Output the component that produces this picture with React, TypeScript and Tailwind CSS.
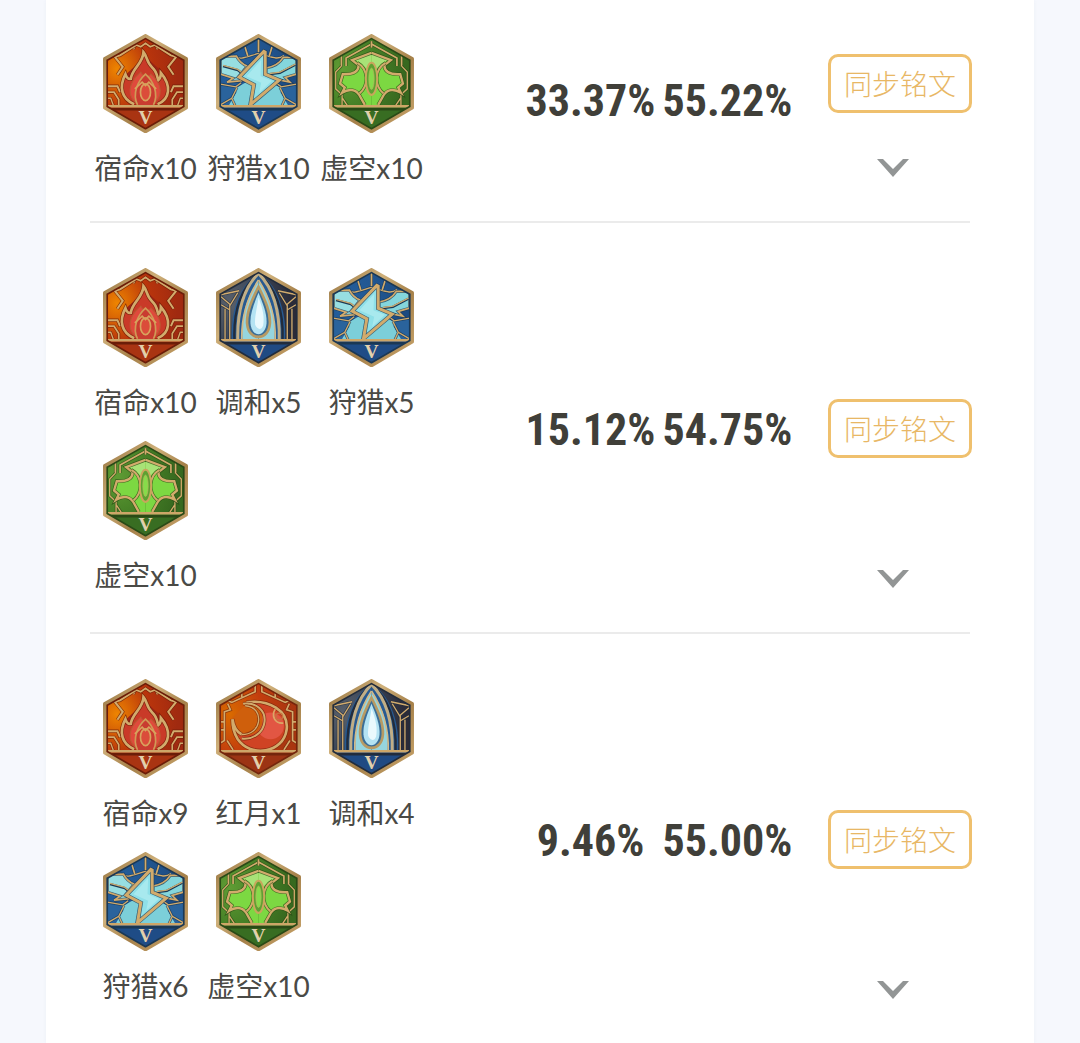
import { useId } from 'react';
import type { ReactNode } from 'react';

type RuneKind = 'fate' | 'hunt' | 'void' | 'harmony' | 'moon';

const runeNames: Record<RuneKind, string> = {
  fate: '宿命',
  hunt: '狩猎',
  void: '虚空',
  harmony: '调和',
  moon: '红月',
};

const palettes: Record<RuneKind, { from: string; mid: string; to: string; base: string; dark: string }> = {
  fate: { from: '#ee8500', mid: '#b8340c', to: '#a02a10', base: '#a93412', dark: '#6b1d08' },
  hunt: { from: '#245f9c', mid: '#225792', to: '#1d4a80', base: '#1f4c86', dark: '#1b3854' },
  void: { from: '#5f9c34', mid: '#457f26', to: '#37691f', base: '#386d22', dark: '#2a4a16' },
  harmony: { from: '#59606b', mid: '#3a4557', to: '#2b2b38', base: '#204a83', dark: '#222c3c' },
  moon: { from: '#d96a00', mid: '#c23d0e', to: '#a93610', base: '#9c3414', dark: '#74260c' },
};

const builds: { runes: [RuneKind, number][]; pick: string; win: string }[] = [
  { runes: [['fate', 10], ['hunt', 10], ['void', 10]], pick: '33.37%', win: '55.22%' },
  { runes: [['fate', 10], ['harmony', 5], ['hunt', 5], ['void', 10]], pick: '15.12%', win: '54.75%' },
  { runes: [['fate', 9], ['moon', 1], ['harmony', 4], ['hunt', 6], ['void', 10]], pick: '9.46%', win: '55.00%' },
];

const HEX = 'M0 7 L122 76 V223 L0 294 L-122 223 V76 Z';

function Both({ children }: { children: ReactNode }) {
  return (
    <>
      {children}
      <g transform="scale(-1 1)">{children}</g>
    </>
  );
}

// gold inlay with a dark edge under it
function Inlay({ d, dark, width = 6, fill = 'none' }: { d: string; dark: string; width?: number; fill?: string }) {
  return (
    <>
      <path d={d} fill={fill} stroke={dark} strokeWidth={width + 4} strokeOpacity="0.75" />
      <path d={d} fill="none" stroke="#d2ab6c" strokeWidth={width} />
    </>
  );
}

function FateArt({ dark }: { dark: string }) {
  return (
    <>
      <Inlay dark={dark} d="M-36 48 L-30 34 L-14 40 L0 30 L14 40 L30 34 L36 48" width={5} />
      <Both>
        <Inlay dark={dark} d="M-30 36 L-76 66 L-92 70 L-68 100 L-84 124 M-118 158 H-84 L-76 176" />
        <Inlay dark={dark} d="M-118 176 H-94 L-80 198 V216" width={5} />
        <Inlay dark={dark} d="M-118 194 H-104 L-96 216" width={4} />
      </Both>
      <path d="M-42 216 C-74 196 -78 156 -60 124 L0 70 L60 124 C78 160 72 198 42 216 Z" fill="#9c2413" />
      <Inlay
        dark={dark}
        width={8}
        fill="#c93a28"
        d="M-34 212 C-72 196 -80 160 -60 122 C-56 134 -52 138 -44 136 C-40 104 -8 92 -6 56 C6 70 2 86 20 102 C34 114 34 126 38 140 C46 134 46 126 46 118 C78 156 74 196 36 212"
      />
      <path d="M-18 214 C-62 190 -50 146 -14 116 C-10 126 -4 128 0 130 C8 128 14 126 16 122 C50 152 56 190 18 214" fill="#df4a3c" stroke="#bb5a34" strokeWidth="3" />
      <path d="M-24 214 C-40 180 -24 144 0 122 C24 144 40 180 24 214" fill="#c93c30" stroke="#d09a56" strokeWidth="5" />
      <ellipse cy="176" rx="15" ry="25" fill="#db4c3a" stroke="#d8a35d" strokeWidth="5" />
      <path d="M-32 166 L-10 146 L0 156 L10 146 L32 166" fill="none" stroke="#d8a35d" strokeWidth="5" />
    </>
  );
}

function HuntArt({ dark }: { dark: string }) {
  return (
    <>
      <Inlay dark={dark} d="M-76 66 C-56 84 -30 68 0 60 C30 66 56 84 76 66" width={4} />
      <Both>
        <Inlay dark={dark} d="M0 12 V56 M-42 36 L-32 68" width={5} />
        <path d="M-112 152 L-66 160 L-86 214 H-112 Z" fill="#2a639c" />
        <path d="M-70 166 L-44 150 L0 130 L10 214 H-88 L-66 176 Z" fill="#7ccfd9" />
      </Both>
      <Inlay dark={dark} fill="#97dee2" width={5} d="M-114 70 L-66 68 C-58 84 -48 92 -34 98 L-58 128 L-52 142 L-94 146 L-76 134 L-114 122 Z" />
      <Inlay dark={dark} fill="#84d6dc" width={5} d="M114 72 L74 72 C62 92 44 100 22 104 L22 122 L54 138 L94 146 L80 132 L114 122 Z" />
      <path d="M-106 98 L-62 110 L-44 124 M110 94 L64 118 L34 122" fill="none" stroke={dark} strokeWidth="7" />
      <path d="M-106 96 L-62 108 L-44 122 M110 92 L64 116 L34 120" fill="none" stroke="#c9ab72" strokeWidth="4" />
      <Both>
        <Inlay dark={dark} width={4} d="M-114 152 L-68 160 L-52 148 M-64 162 L-80 194 L-114 214 M-80 194 L-70 216" />
      </Both>
      <Inlay dark={dark} width={9} fill="#8fe0e8" d="M16 54 L-58 131 L-14 154 L-24 213 L62 140 L20 122 L20 56 Z" />
      <path d="M8 80 L-36 128 L8 148 L2 178 L40 142 L6 128 Z" fill="#b9eff1" opacity="0.6" />
    </>
  );
}

function VoidArt({ dark }: { dark: string }) {
  return (
    <>
      <Both>
        <Inlay dark={dark} width={5} d="M0 24 V42 M0 32 L-76 74 V98 M-90 68 V100" />
        <Inlay dark={dark} width={4} d="M-90 98 L-107 116 V166 L-88 184 V216 M-88 192 L-72 216" />
      </Both>
      <Both>
        <path
          d="M0 58 L-58 80 L-38 96 C-40 118 -60 124 -86 122 L-94 150 L-80 162 L-88 178 C-70 166 -50 166 -38 182 L-20 214 H0 Z"
          fill="#7cd842"
        />
        <path d="M0 58 L-54 80 C-30 86 -18 100 -12 114 L0 96 Z" fill="#a8e277" />
      </Both>
      <Both>
        <Inlay dark={dark} width={7} d="M0 58 L-58 80 L-38 96 C-40 118 -60 124 -86 122 L-94 150 L-80 162 L-88 178 C-70 166 -50 166 -38 182 L-20 214" />
        <Inlay dark={dark} width={6} d="M-42 88 C-10 106 -6 154 -36 180" />
      </Both>
      <ellipse cy="136" rx="17" ry="48" fill="#5da132" stroke="#c9a55c" strokeWidth="6" />
      <ellipse cy="136" rx="8" ry="32" fill="#86dc4a" stroke="#b5b65c" strokeWidth="2" />
    </>
  );
}

function HarmonyArt({ dark }: { dark: string }) {
  return (
    <>
      <Both>
        <path d="M0 18 C-50 46 -84 120 -80 216 H0 Z" fill="#275a92" />
        <Inlay dark={dark} width={4} d="M-114 82 L-58 70 M-112 88 L-84 112 L-62 76 M-112 112 L-88 126 M-86 112 V216 M-100 124 V216" />
        <path d="M0 18 C-46 56 -76 120 -72 218" fill="none" stroke={dark} strokeWidth="7" />
        <path d="M0 18 C-42 60 -64 130 -62 218" fill="none" stroke="#c1ae86" strokeWidth="9" />
        <path d="M0 42 C-34 84 -52 140 -48 216 H0 Z" fill="#96d5de" />
        <path d="M0 38 C-30 84 -52 140 -50 218" fill="none" stroke="#cfba8b" strokeWidth="5" />
      </Both>
      <path d="M0 58 C20 98 36 134 34 168 C32 194 18 208 0 208 C-18 208 -32 194 -34 168 C-36 134 -20 98 0 58 Z" fill="#3b6e97" stroke="#b79a64" strokeWidth="8" />
      <path d="M0 76 C14 110 26 140 24 168 C22 188 12 200 0 200 C-12 200 -22 188 -24 168 C-26 140 -14 110 0 76 Z" fill="#b4e3f3" />
      <path d="M0 90 C14 126 18 150 14 174 C8 190 -4 186 -10 172 C-12 146 -4 122 0 90 Z" fill="#eaf9fd" />
      <path d="M-16 228 H16 L0 250 Z" fill="#3a3537" />
    </>
  );
}

function MoonArt({ dark }: { dark: string }) {
  return (
    <>
      <Both>
        <Inlay dark={dark} width={5} d="M-10 14 V40 L-80 72 L-92 66 M-92 76 L-84 94 L-102 100 V130 H-118 M-102 130 V154 H-118 M-102 154 V186 L-118 196 M-94 186 L-76 214 M-50 40 V56" />
      </Both>
      <circle cx="8" cy="144" r="74" fill="#cf4324" />
      <circle cx="36" cy="142" r="40" fill="#e25643" />
      <path d="M-34 74 C-2 74 12 96 12 124 C12 162 -26 180 -60 166 L-84 124 Z" fill="#cf5f0c" />
      <Inlay dark={dark} width={8} d="M-36 72 C30 62 92 96 84 154 C74 224 -24 238 -62 182 C-72 166 -78 146 -78 122 C-74 148 -66 160 -50 168" />
      <Inlay dark={dark} width={6} d="M-46 76 C-6 70 22 98 18 130 C14 164 -18 184 -50 180" />
      <Inlay dark={dark} width={4} d="M-40 82 C-10 84 4 106 0 130 C-4 154 -24 168 -50 168" />
      <path d="M50 92 C38 112 48 136 74 134" fill="none" stroke="#dba766" strokeWidth="5" />
      <circle cx="62" cy="114" r="10" fill="none" stroke="#c8723f" strokeWidth="4" />
    </>
  );
}

const arts = { fate: FateArt, hunt: HuntArt, void: VoidArt, harmony: HarmonyArt, moon: MoonArt };

function RuneGem({ kind }: { kind: RuneKind }) {
  const id = useId();
  const p = palettes[kind];
  const Art = arts[kind];

  return (
    <svg viewBox="-130 2 260 296" className="h-[99px] w-[87px]" aria-hidden="true">
      <defs>
        <radialGradient id={`${id}bg`} cx="0.15" cy="0.35" r="0.75">
          <stop offset="0" stopColor={p.from} />
          <stop offset="0.55" stopColor={p.mid} />
          <stop offset="1" stopColor={p.to} />
        </radialGradient>
        <linearGradient id={`${id}rim`} x1="0" y1="0" x2="1" y2="1">
          <stop offset="0" stopColor="#94713c" />
          <stop offset="0.35" stopColor="#cfb07a" />
          <stop offset="0.6" stopColor="#a6814a" />
          <stop offset="1" stopColor="#c9a56c" />
        </linearGradient>
        <clipPath id={`${id}clip`}>
          <path d={HEX} />
        </clipPath>
      </defs>
      <g clipPath={`url(#${id}clip)`}>
        <path d={HEX} fill={`url(#${id}bg)`} />
        <Art dark={p.dark} />
        <path d="M-122 220 H122 V300 H-122 Z" fill={p.base} />
        <path d="M-122 227 H122" stroke={p.dark} strokeWidth="8" />
        <path d="M-122 218 H122" stroke="#cda668" strokeWidth="8" />
        <path d={HEX} fill="none" stroke={p.dark} strokeWidth="20" />
      </g>
      <path d={HEX} fill="none" stroke={`url(#${id}rim)`} strokeWidth="10" strokeLinejoin="round" />
      <text
        y="270"
        textAnchor="middle"
        fontSize="58"
        fontWeight="700"
        fill="#e2d0ac"
        className="font-['Liberation_Serif',serif]"
      >
        V
      </text>
    </svg>
  );
}

function Chevron() {
  return (
    <svg viewBox="0 0 32 18" className="h-[18px] w-8" aria-hidden="true">
      <path d="M0 0 H6 L16 10 L26 0 H32 L16 18 Z" fill="#929595" />
    </svg>
  );
}

export default function App() {
  return (
    <div className="min-h-screen bg-[#f6f8fd] px-[46px] font-[Lato,'Noto_Sans_CJK_SC',sans-serif]">
      <main className="min-h-screen bg-white pr-[62px] pl-11 shadow-[0_0_4px_rgba(80,90,130,0.05)]">
        <ul>
          {builds.map((build, i) => (
            <li key={i}>
              {i > 0 && <hr className="mr-0.5 border-t-2 border-[#ebebeb]" />}
              <div className="flex">
                <div className={`-ml-px flex w-[339px] flex-wrap gap-y-[21px] ${i === 0 ? 'pt-[34px] pb-[35px]' : 'pt-[45px] pb-[39px]'}`}>
                  {build.runes.map(([kind, count]) => (
                    <figure key={kind} className="flex w-[113px] flex-col items-center">
                      <RuneGem kind={kind} />
                      <figcaption className="mt-[17px] text-[28px] leading-9 whitespace-nowrap text-[#4a4a46]">
                        {runeNames[kind]}x{count}
                      </figcaption>
                    </figure>
                  ))}
                </div>

                <div
                  className={`ml-auto flex items-center text-center font-['Roboto_Condensed','Liberation_Sans_Narrow',sans-serif] text-[44px] font-bold text-[#403f39] ${i === 0 ? 'pb-5' : 'pt-1'}`}
                >
                  <span className="w-[137px]">{build.pick}</span>
                  <span className="w-[137px]">{build.win}</span>
                </div>

                <div className={`ml-8 flex flex-col items-center pb-11 ${i === 0 ? 'pt-2' : 'pt-16'}`}>
                  <button
                    type="button"
                    className="my-auto h-[59px] rounded-[10px] border-3 border-[#efc06e] px-[13px] text-[28px] leading-none font-light whitespace-nowrap text-[#e8b765]"
                  >
                    同步铭文
                  </button>
                  <button type="button" aria-label="展开" className="mr-3.5">
                    <Chevron />
                  </button>
                </div>
              </div>
            </li>
          ))}
        </ul>
      </main>
    </div>
  );
}
